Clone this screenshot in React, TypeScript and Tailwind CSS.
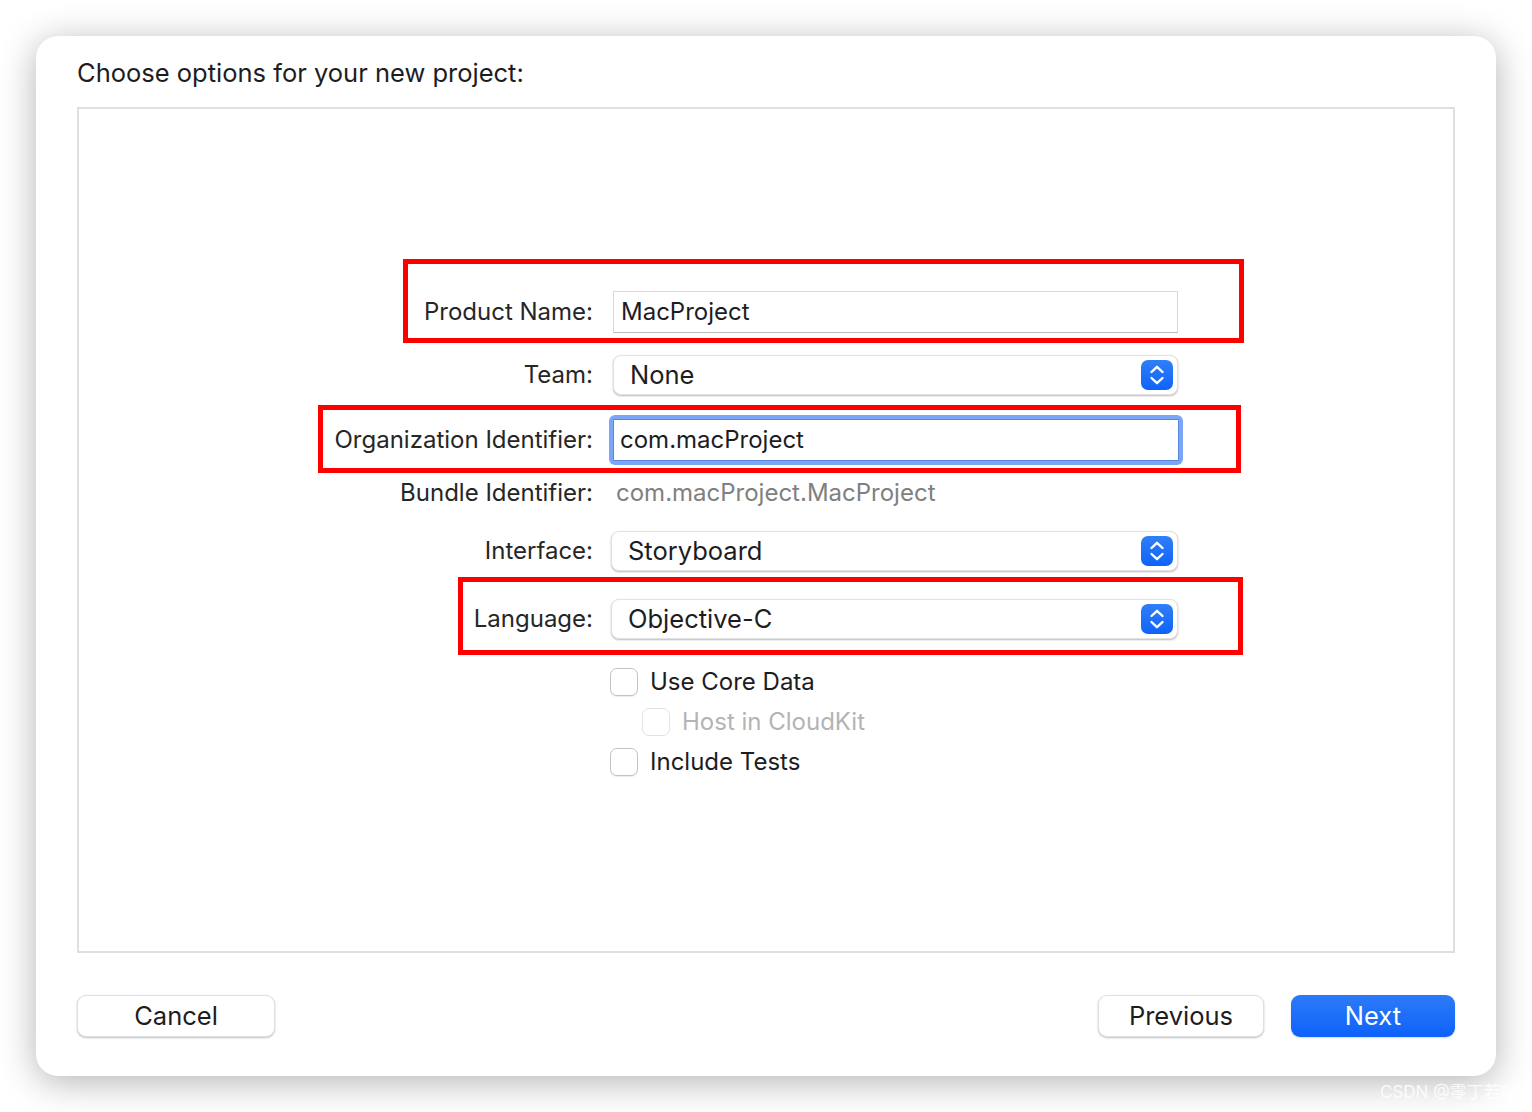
import React from "react";

const font = { fontFamily: "Inter, 'Noto Sans CJK SC', sans-serif" };

function Stepper() {
  return (
    <div className="w-[32px] h-[30px] rounded-[7px] bg-gradient-to-b from-[#2f7ff7] to-[#0e62fa] flex items-center justify-center shrink-0">
      <svg width="16" height="22" viewBox="0 0 16 22" fill="none">
        <path d="M2.5 8 L8 2.8 L13.5 8" stroke="white" strokeWidth="2.4" strokeLinecap="round" strokeLinejoin="round" />
        <path d="M2.5 14 L8 19.2 L13.5 14" stroke="white" strokeWidth="2.4" strokeLinecap="round" strokeLinejoin="round" />
      </svg>
    </div>
  );
}

function Popup({ value, shift = true }: { value: string; shift?: boolean }) {
  return (
    <div
      className={
        "h-[40px] rounded-[8px] bg-white border border-[#e2e2e2] shadow-[0_1px_2px_rgba(0,0,0,0.28)] flex items-center justify-between pr-[4px] " +
        (shift ? "w-[567px] -ml-[2px] pl-[16px]" : "w-[565px] pl-[16px]")
      }
    >
      <span className="text-[25.5px] text-[#1d1d1f] leading-none">{value}</span>
      <Stepper />
    </div>
  );
}

function Row({ label, children, className }: { label: string; children: React.ReactNode; className?: string }) {
  return (
    <div className={"flex items-center " + (className || "")}>
      <div className="w-[514px] text-right text-[24px] text-[#262626] leading-none">{label}</div>
      <div className="ml-[20px] flex items-center">{children}</div>
    </div>
  );
}

function Check({ label, disabled, indent }: { label: string; disabled?: boolean; indent?: boolean }) {
  return (
    <div className={"flex items-center h-[28px] " + (indent ? "pl-[563px]" : "pl-[531px]")}>
      <div
        className={
          "w-[28px] h-[28px] rounded-[7px] bg-white border " +
          (disabled ? "border-[#e3e3e3]" : "border-[#c4c4c4] shadow-[0_1px_1px_rgba(0,0,0,0.08)]")
        }
      />
      <span className={"ml-[12px] text-[24px] leading-none " + (disabled ? "text-[#b4b4b4]" : "text-[#1d1d1f]")}>{label}</span>
    </div>
  );
}

export default function App() {
  return (
    <div className="w-[1532px] h-[1112px] bg-white relative overflow-hidden" style={font}>
      <div className="absolute left-[36px] top-[36px] w-[1460px] h-[1040px] rounded-[22px] bg-white shadow-[0_6px_36px_rgba(0,0,0,0.3)] px-[41px] pt-[22px] flex flex-col">
        <h1 className="text-[25.5px] leading-[30px] text-[#1d1d1f] font-normal">Choose options for your new project:</h1>

        <div className="relative mt-[19px] h-[846px] border-2 border-[#dfdfdf] pt-[182px]">
          <Row label="Product Name:" className="h-[42px]">
            <div className="w-[565px] h-[42px] bg-white border border-[#d8d8d8] border-b-[#b9b9b9] flex items-center pl-[7px]">
              <span className="text-[24px] text-[#1d1d1f] leading-none">MacProject</span>
            </div>
          </Row>

          <Row label="Team:" className="h-[40px] mt-[22px]">
            <Popup value="None" shift={false} />
          </Row>

          <Row label="Organization Identifier:" className="h-[50px] mt-[20px]">
            <div className="-ml-[4px] w-[574px] h-[50px] rounded-[6px] bg-[#7ba5f7] p-[4px]">
              <div className="w-full h-full bg-white border border-[#5a87dc] flex items-center pl-[6px]">
                <span className="text-[24px] text-[#1d1d1f] leading-none">com.macProject</span>
              </div>
            </div>
          </Row>

          <Row label="Bundle Identifier:" className="h-[40px] mt-[8px]">
            <span className="ml-[3px] text-[24px] text-[#808080] leading-none">com.macProject.MacProject</span>
          </Row>

          <Row label="Interface:" className="h-[40px] mt-[18px]">
            <Popup value="Storyboard" />
          </Row>

          <Row label="Language:" className="h-[40px] mt-[28px]">
            <Popup value="Objective-C" />
          </Row>

          <div className="mt-[29px] flex flex-col gap-[12px]">
            <Check label="Use Core Data" />
            <Check label="Host in CloudKit" disabled indent />
            <Check label="Include Tests" />
          </div>

          {/* annotation boxes */}
          <div className="absolute left-[324px] top-[150px] w-[841px] h-[84px] border-[5px] border-[#ff0000]" />
          <div className="absolute left-[239px] top-[296px] w-[923px] h-[68px] border-[5px] border-[#ff0000]" />
          <div className="absolute left-[379px] top-[468px] w-[785px] h-[78px] border-[5px] border-[#ff0000]" />
        </div>

        <div className="mt-[42px] flex items-center">
          <button className="w-[198px] h-[42px] rounded-[9px] bg-white border border-[#e0e0e0] shadow-[0_1px_2px_rgba(0,0,0,0.25)] text-[25.5px] text-[#1d1d1f]">
            Cancel
          </button>
          <div className="flex-1" />
          <button className="w-[166px] h-[42px] rounded-[9px] bg-white border border-[#e0e0e0] shadow-[0_1px_2px_rgba(0,0,0,0.25)] text-[25.5px] text-[#1d1d1f]">
            Previous
          </button>
          <button className="ml-[27px] w-[164px] h-[42px] rounded-[9px] bg-gradient-to-b from-[#2b7bf7] to-[#0d61fa] shadow-[0_1px_2px_rgba(0,0,0,0.15)] text-[25.5px] text-white">
            Next
          </button>
        </div>
      </div>

      <div className="absolute left-[1380px] top-[1084px] text-[17px] leading-none text-white/80">CSDN @零丁若叹</div>
    </div>
  );
}
